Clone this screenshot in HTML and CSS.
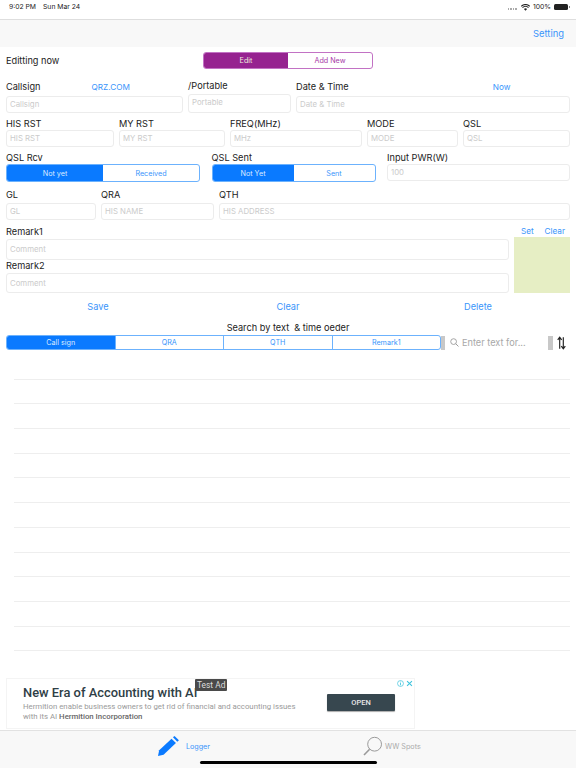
FILE: index.html
```html
<!DOCTYPE html>
<html lang="en">
<head>
<meta charset="utf-8">
<title>Logger</title>
<link rel="stylesheet" href="styles.css">
</head>
<body>
<div class="page">
  <div class="status">
    <div class="status-left"><span>9:02 PM</span><span>Sun Mar 24</span></div>
    <div class="status-right">
      <span class="dots"><i></i><i></i><i></i><i></i></span>
      <svg class="wifi" viewBox="0 0 12 9" width="9" height="7"><path d="M0.3 2.9C3.5 -0.3 8.5 -0.3 11.7 2.9M2 4.7C4.3 2.5 7.7 2.5 10 4.7" fill="none" stroke="#222" stroke-width="1.4"/><path d="M3.9 6.4C5.1 5.4 6.9 5.4 8.1 6.4L6 8.8Z" fill="#222"/></svg>
      <span>100%</span>
      <span class="battery"><b></b></span>
    </div>
  </div>
  <div class="nav"><span class="link setting">Setting</span></div>
  <div class="edit-row">
    <span class="edit-title">Editting now</span>
    <div class="seg seg-purple">
      <span class="on">Edit</span><span>Add New</span>
    </div>
  </div>

  <div class="row row-call">
    <div class="cell">
      <div class="label-line"><span class="lbl">Callsign</span><span class="link qrz">QRZ.COM</span></div>
      <div class="field">Callsign</div>
    </div>
    <div class="cell">
      <span class="lbl">/Portable</span>
      <div class="field field-tall">Portable</div>
    </div>
    <div class="cell">
      <div class="label-line"><span class="lbl">Date &amp; Time</span><span class="link now">Now</span></div>
      <div class="field">Date &amp; Time</div>
    </div>
  </div>

  <div class="row row-rst">
    <div class="cell"><span class="lbl">HIS RST</span><div class="field">HIS RST</div></div>
    <div class="cell"><span class="lbl">MY RST</span><div class="field">MY RST</div></div>
    <div class="cell"><span class="lbl">FREQ(MHz)</span><div class="field">MHz</div></div>
    <div class="cell"><span class="lbl">MODE</span><div class="field">MODE</div></div>
    <div class="cell"><span class="lbl">QSL</span><div class="field">QSL</div></div>
  </div>

  <div class="row row-qsl">
    <div class="cell"><span class="lbl">QSL Rcv</span>
      <div class="seg seg-blue seg-tall"><span class="on">Not yet</span><span>Received</span></div></div>
    <div class="cell"><span class="lbl">QSL Sent</span>
      <div class="seg seg-blue seg-tall"><span class="on">Not Yet</span><span>Sent</span></div></div>
    <div class="cell"><span class="lbl">Input PWR(W)</span><div class="field">100</div></div>
  </div>

  <div class="row row-gl">
    <div class="cell"><span class="lbl">GL</span><div class="field">GL</div></div>
    <div class="cell"><span class="lbl">QRA</span><div class="field">HIS NAME</div></div>
    <div class="cell"><span class="lbl">QTH</span><div class="field">HIS ADDRESS</div></div>
  </div>

  <div class="row row-remark">
    <div class="remarks">
      <span class="lbl">Remark1</span>
      <div class="field field-remark">Comment</div>
      <span class="lbl lbl-r2">Remark2</span>
      <div class="field field-remark field-remark-2">Comment</div>
    </div>
    <div class="swatch-col">
      <div class="swatch-links"><span class="link">Set</span><span class="link">Clear</span></div>
      <div class="swatch"></div>
    </div>
  </div>

  <div class="actions">
    <span class="link">Save</span><span class="link">Clear</span><span class="link">Delete</span>
  </div>

  <div class="search-title">Search by text &nbsp;&amp; time oeder</div>
  <div class="search-row">
    <div class="seg seg-blue seg-search">
      <span class="on">Call sign</span><span>QRA</span><span>QTH</span><span>Remark1</span>
    </div>
    <i class="grip"></i>
    <svg class="glass" viewBox="0 0 10 10" width="9" height="9"><circle cx="4" cy="4" r="3.2" fill="none" stroke="#9b9b9b" stroke-width="1"/><path d="M6.4 6.4 9.4 9.4" stroke="#9b9b9b" stroke-width="1.1"/></svg>
    <span class="search-text">Enter text for...</span>
    <i class="grip grip-right"></i>
    <svg class="sort" viewBox="0 0 10 15" width="9" height="14"><path d="M3 14V1.5M0.8 4 3 1 5.2 4" fill="none" stroke="#222" stroke-width="1.3"/><path d="M7 1V13.5M4.8 11 7 14 9.2 11" fill="none" stroke="#222" stroke-width="1.3"/></svg>
  </div>

  <div class="table">
    <div class="tr"></div><div class="tr"></div><div class="tr"></div><div class="tr"></div>
    <div class="tr"></div><div class="tr"></div><div class="tr"></div><div class="tr"></div>
    <div class="tr"></div><div class="tr"></div><div class="tr"></div><div class="tr"></div>
  </div>

  <div class="ad">
    <div class="ad-copy">
      <div class="ad-title">New Era of Accounting with AI</div>
      <div class="ad-desc">Hermition enable business owners to get rid of financial and accounting issues<br>with its AI <b>Hermition Incorporation</b></div>
    </div>
    <div class="ad-open">OPEN</div>
    <span class="ad-badge">Test Ad</span>
    <span class="ad-icons">
      <svg viewBox="0 0 10 10" width="7" height="7"><circle cx="5" cy="5" r="4.2" fill="none" stroke="#3cc3dc" stroke-width="1"/><path d="M5 4.2V7.6M5 2.4V3.4" stroke="#3cc3dc" stroke-width="1.2"/></svg>
      <svg viewBox="0 0 10 10" width="7" height="7"><path d="M1.5 1.5 8.5 8.5M8.5 1.5 1.5 8.5" stroke="#3cc3dc" stroke-width="1.5"/></svg>
    </span>
  </div>

  <div class="tabbar">
    <div class="tab tab-logger">
      <svg viewBox="0 0 22 22" width="22" height="22"><path d="M1 21 2.2 15.2 14.6 3.6 19 8 6.6 19.8Z" fill="#0a7aff"/><path d="M16 2.3 17.6 1 22 5.2 20.4 6.7Z" fill="#0a7aff"/></svg>
      <span>Logger</span>
    </div>
    <div class="tab tab-spots">
      <svg viewBox="0 0 20 20" width="20" height="20"><circle cx="11.6" cy="8.2" r="6.9" fill="none" stroke="#9a9a9a" stroke-width="1"/><path d="M6.6 13.2 1 19" stroke="#9a9a9a" stroke-width="1.6"/></svg>
      <span>WW Spots</span>
    </div>
    <i class="home"></i>
  </div>
</div>
</body>
</html>
```
FILE: styles.css
```css
* { box-sizing: border-box; }
html, body { margin: 0; padding: 0; background: #fff; }
body { font-family: Inter, "Liberation Sans", sans-serif; color: #222; }
.page { position: relative; width: 576px; height: 768px; display: flex; flex-direction: column; overflow: hidden; }

.status { height: 19px; flex: none; display: flex; justify-content: space-between; align-items: flex-start; padding: 3px 8px 0 9px; font-size: 6.8px; line-height: 8px; color: #222; }
.status-left { display: flex; gap: 7px; }
.status-right { display: flex; align-items: center; gap: 3px; }
.dots { display: flex; gap: 1px; margin-right: 1px; }
.dots i { width: 1.5px; height: 1.5px; background: #aaa; margin-top: 4px; }
.battery { width: 14px; height: 6px; background: #222; border-radius: 1.5px; display: block; position: relative; }
.battery b { position: absolute; right: -1.5px; top: 2px; width: 1px; height: 2px; background: #888; }

.nav { height: 28px; flex: none; background: #f8f8f8; border-top: 1px solid #dedede; display: flex; justify-content: flex-end; align-items: center; padding: 0 12px 0 0; }
.link { color: #3a95fb; }
.setting { font-size: 9.4px; }

.edit-row { height: 27px; flex: none; display: flex; align-items: center; padding: 0 0 0 6px; }
.edit-title { font-size: 9.2px; width: 197px; }
.seg { display: flex; overflow: hidden; font-size: 7.2px; }
.seg span { display: flex; align-items: center; justify-content: center; }
.seg-purple { width: 170px; height: 17px; border: 1px solid #c272c4; border-radius: 3px; color: #a83ba8; }
.seg-purple span { flex: 1; }
.seg-purple .on { background: #962290; color: #eed; }

.row { display: grid; flex: none; column-gap: 5px; padding: 0 6px; align-items: end; }
.cell { display: flex; flex-direction: column; min-width: 0; }
.lbl { font-size: 9.2px; line-height: 9px; height: 11px; color: #222; display: block; }
.label-line { display: flex; height: 11px; }
.field { height: 17px; border: 1px solid #ececec; border-radius: 3px; font-size: 7.8px; line-height: 14px; color: #cbcbcb; padding-left: 3px; background: #fff; }
.field-tall { height: 19px; line-height: 15px; }
.qrz { font-size: 8.2px; line-height: 10px; margin-left: 51px; }
.now { font-size: 8.2px; line-height: 10px; margin-left: 144px; }

.row-call { grid-template-columns: 177px 103px 274px; padding-top: 7px; }
.row-call .field { margin-top: 3px; }
.row-call .field-tall { margin-top: 2px; }
.row-rst { grid-template-columns: 108px 106px 132px 91px 107px; padding-top: 6px; }
.row-qsl { grid-template-columns: 194px 164px 183px; column-gap: 11.5px; padding-top: 6px; align-items: start; }
.row-gl { grid-template-columns: 90px 113px 351px; padding-top: 8px; }
.row-gl .field { margin-top: 2px; }

.seg-blue { border: 1px solid #6cb2fd; border-radius: 3px; color: #3a95fb; }
.seg-blue span { flex: 1; }
.seg-blue .on { background: #0a7aff; color: #dbeaff; }
.seg-tall { height: 18px; }
.seg-search { width: 435px; height: 15px; flex: none; }
.seg-search .on { flex: none; width: 107.5px; }
.seg-search span + span { border-left: 1px solid #6cb2fd; }

.row-remark { grid-template-columns: 503px 56px; align-items: start; padding-top: 7px; }
.remarks .lbl-r2 { margin-top: 1px; }
.field-remark { height: 21px; margin-top: 1px; line-height: 18px; }
.field-remark-2 { height: 20px; }
.swatch-links { display: flex; justify-content: space-between; font-size: 8.2px; line-height: 9px; padding: 0 5px 0 7px; height: 10px; }
.swatch { height: 56px; background: #e6eec4; }

.actions { display: grid; flex: none; grid-template-columns: repeat(3, 190px); justify-content: center; text-align: center; font-size: 9.2px; line-height: 11px; margin-top: 8px; height: 12px; }

.search-title { font-size: 9.2px; line-height: 11px; height: 11px; flex: none; text-align: center; margin-top: 9px; }
.search-row { display: flex; flex: none; align-items: center; height: 15px; margin-top: 2px; padding-left: 6px; }
.grip { width: 4px; height: 14px; background: #c8c8c8; flex: none; }
.glass { margin-left: 5px; flex: none; }
.search-text { margin-left: 3px; font-size: 9.2px; color: #a8a8a8; width: 86px; flex: none; }
.grip-right { width: 5px; }
.sort { margin-left: 4px; flex: none; }

.table { padding: 5px 6px 0 14px; flex: 1; min-height: 0; }
.tr { height: 24.7px; border-bottom: 1px solid #eeeeee; }

.ad { position: relative; margin: 0 0 1px 6px; width: 409px; height: 51px; flex: none; border: 1px solid #f4f4f4; display: flex; align-items: flex-start; }
.ad-copy { padding: 6px 0 0 16px; width: 320px; flex: none; }
.ad-title { font-size: 12.9px; line-height: 15px; font-weight: 500; color: #2f3e46; font-family: Roboto, sans-serif; white-space: nowrap; }
.ad-desc { font-size: 7.8px; line-height: 10px; color: #9a9a9a; margin-top: 2px; font-family: Roboto, sans-serif; white-space: nowrap; }
.ad-desc b { color: #666; font-weight: 500; }
.ad-open { margin: 15px 0 0 0; width: 68px; height: 17px; background: #37474f; color: #e8e8e8; font: 500 7.5px/17px Roboto, sans-serif; text-align: center; border-radius: 1px; box-shadow: 0 1px 1px #aaa; }
.ad-badge { position: absolute; left: 188px; top: 0; height: 12px; padding: 0 2px; background: #4a4a4a; color: #ddd; font: 8.4px/12px Roboto, sans-serif; border-radius: 1px; }
.ad-icons { position: absolute; right: 1px; top: 1px; display: flex; gap: 2px; }

.tabbar { height: 38px; flex: none; background: #f8f8f8; border-top: 1px solid #e2e2e2; display: flex; position: relative; }
.tab { display: flex; align-items: center; font-size: 7.2px; padding-bottom: 7px; }
.tab-logger { width: 210px; padding-left: 157px; gap: 7px; color: #3a95fb; flex: none; }
.tab-spots { margin-left: 153px; gap: 2px; color: #aaa; }
.home { position: absolute; left: 200px; bottom: 4px; width: 177px; height: 3px; background: #000; border-radius: 2px; }
```
